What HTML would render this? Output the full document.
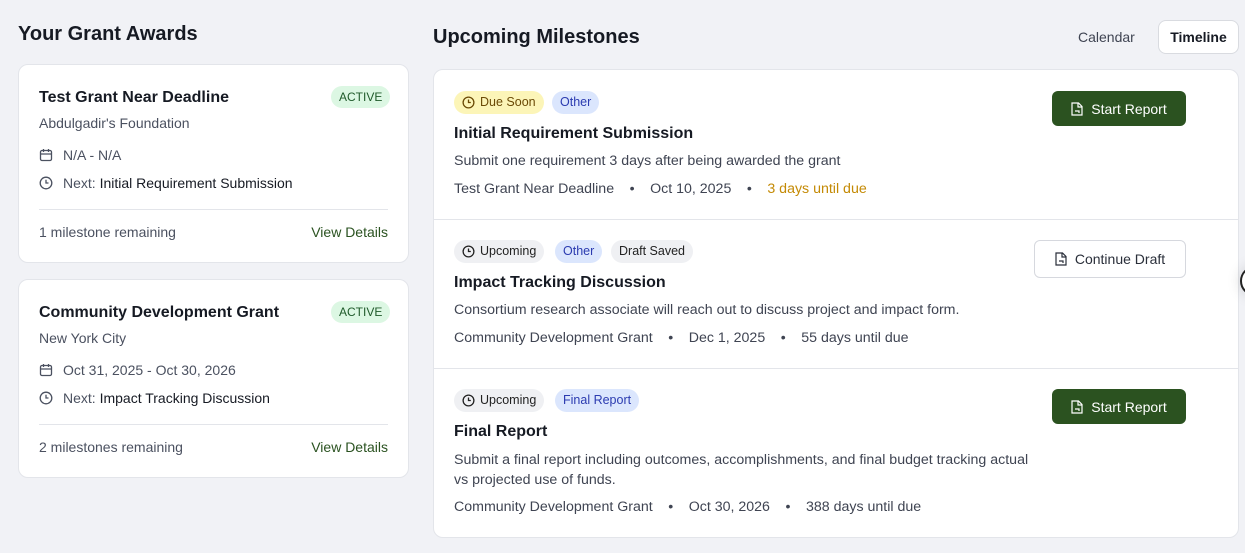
<!DOCTYPE html><html><head><style>
*{box-sizing:border-box;margin:0;padding:0}
body{width:1245px;height:553px;background:#f1f2f6;font-family:"Liberation Sans",sans-serif;color:#161a23;position:relative;overflow:hidden}
.a{position:absolute;white-space:nowrap}
h2{font-size:20px;font-weight:700}
.card{position:absolute;background:#fff;border:1px solid #e3e5ea;border-radius:10px}
.t{font-size:16px;font-weight:700}
.g{color:#4b5160;font-size:14px}
.act{background:#dcf7e3;color:#1f5a2a;font-size:12px;border-radius:12px;padding:4px 8px}
.vd{color:#2a5220;font-size:14px}
.hr{position:absolute;height:1px;background:#e3e5ea}
.bd{position:absolute;height:23px;border-radius:12px;font-size:12.5px;line-height:23px;padding:0 8px;display:flex;align-items:center;gap:5px}
.y{background:#fcf5b8;color:#6b4a06}.b{background:#dbe6fd;color:#2b3bb0}.gr{background:#eff0f3;color:#222}
.btn{position:absolute;border-radius:6px;font-size:14px;display:flex;align-items:center;justify-content:center;gap:8px}
.dk{background:#2b5220;color:#fff}.wh{background:#fff;border:1px solid #d6d8de;color:#2a2f3a}
.m{font-size:14.2px;color:#3f4452}
.s{display:inline-block;width:36px;text-align:center}
</style></head><body>
<h2 class="a" style="left:18px;top:23px">Your Grant Awards</h2>
<h2 class="a" style="left:433px;top:26px">Upcoming Milestones</h2>
<div class="a" style="left:1078px;top:29px;font-size:14px;color:#3f4452">Calendar</div>
<div class="a" style="left:1158px;top:20px;width:81px;height:34px;background:#fff;border:1px solid #d9dbe0;border-radius:8px;font-size:14px;font-weight:600;text-align:center;line-height:32px">Timeline</div>

<div class="card" style="left:18px;top:64px;width:391px;height:199px"></div>
<div class="a t" style="left:39px;top:89px">Test Grant Near Deadline</div>
<div class="a act" style="left:331px;top:86px">ACTIVE</div>
<div class="a g" style="left:39px;top:115px">Abdulgadir's Foundation</div>
<svg class="a" style="left:39px;top:148px" width="14" height="14" viewBox="0 0 14 14" fill="none" stroke="#4b5160" stroke-width="1.3"><rect x="1.5" y="2.5" width="11" height="10" rx="1.5"/><path d="M1.5 6h11M4.5 1v3M9.5 1v3"/></svg>
<div class="a g" style="left:63px;top:147px">N/A - N/A</div>
<svg class="a" style="left:39px;top:176px" width="14" height="14" viewBox="0 0 14 14" fill="none" stroke="#4b5160" stroke-width="1.3"><circle cx="7" cy="7" r="5.8"/><path d="M7 3.8V7h2.5"/></svg>
<div class="a g" style="left:63px;top:175px">Next: <span style="color:#161a23">Initial Requirement Submission</span></div>
<div class="hr" style="left:39px;top:209px;width:349px"></div>
<div class="a g" style="left:39px;top:224px">1 milestone remaining</div>
<div class="a vd" style="right:857px;top:224px">View Details</div>

<div class="card" style="left:18px;top:279px;width:391px;height:199px"></div>
<div class="a t" style="left:39px;top:304px">Community Development Grant</div>
<div class="a act" style="left:331px;top:301px">ACTIVE</div>
<div class="a g" style="left:39px;top:330px">New York City</div>
<svg class="a" style="left:39px;top:363px" width="14" height="14" viewBox="0 0 14 14" fill="none" stroke="#4b5160" stroke-width="1.3"><rect x="1.5" y="2.5" width="11" height="10" rx="1.5"/><path d="M1.5 6h11M4.5 1v3M9.5 1v3"/></svg>
<div class="a g" style="left:63px;top:362px">Oct 31, 2025 - Oct 30, 2026</div>
<svg class="a" style="left:39px;top:391px" width="14" height="14" viewBox="0 0 14 14" fill="none" stroke="#4b5160" stroke-width="1.3"><circle cx="7" cy="7" r="5.8"/><path d="M7 3.8V7h2.5"/></svg>
<div class="a g" style="left:63px;top:390px">Next: <span style="color:#161a23">Impact Tracking Discussion</span></div>
<div class="hr" style="left:39px;top:424px;width:349px"></div>
<div class="a g" style="left:39px;top:439px">2 milestones remaining</div>
<div class="a vd" style="right:857px;top:439px">View Details</div>

<div class="card" style="left:433px;top:69px;width:806px;height:469px"></div>
<div class="hr" style="left:434px;top:219px;width:804px"></div>
<div class="hr" style="left:434px;top:368px;width:804px"></div>

<div class="bd y" style="left:454px;top:91px"><svg width="13" height="13" viewBox="0 0 14 14" fill="none" stroke="#6b4a06" stroke-width="1.4"><circle cx="7" cy="7" r="5.8"/><path d="M7 3.8V7h2.5"/></svg>Due Soon</div>
<div class="bd b" style="left:552px;top:91px">Other</div>
<div class="a t" style="left:454px;top:125px">Initial Requirement Submission</div>
<div class="a m" style="left:454px;top:153px">Submit one requirement 3 days after being awarded the grant</div>
<div class="a m" style="left:454px;top:181px">Test Grant Near Deadline<span class="s">•</span>Oct 10, 2025<span class="s">•</span><span style="color:#c48a05">3 days until due</span></div>
<div class="btn dk" style="left:1052px;top:91px;width:134px;height:35px"><svg width="12" height="14" viewBox="0 0 12 14" fill="none" stroke="#fff" stroke-width="1.2"><path d="M1 1h6.5L11 4.5V13H1z"/><path d="M7 1v4h4M4 9h4v2"/></svg>Start Report</div>

<div class="bd gr" style="left:454px;top:240px"><svg width="13" height="13" viewBox="0 0 14 14" fill="none" stroke="#222" stroke-width="1.4"><circle cx="7" cy="7" r="5.8"/><path d="M7 3.8V7h2.5"/></svg>Upcoming</div>
<div class="bd b" style="left:555px;top:240px">Other</div>
<div class="bd gr" style="left:611px;top:240px">Draft Saved</div>
<div class="a t" style="left:454px;top:274px">Impact Tracking Discussion</div>
<div class="a m" style="left:454px;top:302px">Consortium research associate will reach out to discuss project and impact form.</div>
<div class="a m" style="left:454px;top:330px">Community Development Grant<span class="s">•</span>Dec 1, 2025<span class="s">•</span>55 days until due</div>
<div class="btn wh" style="left:1034px;top:240px;width:152px;height:38px"><svg width="12" height="14" viewBox="0 0 12 14" fill="none" stroke="#2a2f3a" stroke-width="1.2"><path d="M1 1h6.5L11 4.5V13H1z"/><path d="M7 1v4h4M4 9h4v2"/></svg>Continue Draft</div>

<div class="bd gr" style="left:454px;top:389px"><svg width="13" height="13" viewBox="0 0 14 14" fill="none" stroke="#222" stroke-width="1.4"><circle cx="7" cy="7" r="5.8"/><path d="M7 3.8V7h2.5"/></svg>Upcoming</div>
<div class="bd b" style="left:555px;top:389px">Final Report</div>
<div class="a t" style="left:454px;top:423px">Final Report</div>
<div class="a m" style="left:454px;top:450px;line-height:20px">Submit a final report including outcomes, accomplishments, and final budget tracking actual<br>vs projected use of funds.</div>
<div class="a m" style="left:454px;top:499px">Community Development Grant<span class="s">•</span>Oct 30, 2026<span class="s">•</span>388 days until due</div>
<div class="btn dk" style="left:1052px;top:389px;width:134px;height:35px"><svg width="12" height="14" viewBox="0 0 12 14" fill="none" stroke="#fff" stroke-width="1.2"><path d="M1 1h6.5L11 4.5V13H1z"/><path d="M7 1v4h4M4 9h4v2"/></svg>Start Report</div>
<div class="a" style="left:1240px;top:266px;width:30px;height:30px;border-radius:50%;border:2px solid #222;background:#fff;box-shadow:0 0 14px rgba(0,0,0,.15)"></div>
</body></html>
